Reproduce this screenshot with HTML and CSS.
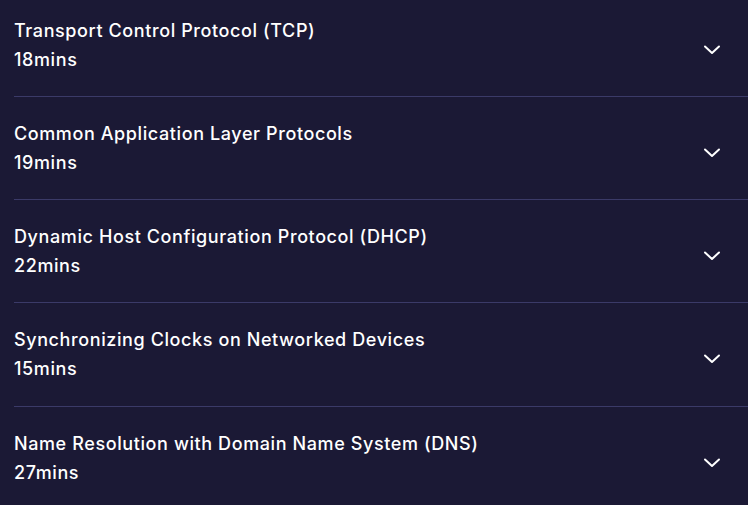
FILE: index.html
```html
<!DOCTYPE html>
<html>
<head>
<meta charset="utf-8">
<link rel="stylesheet" href="styles.css">
</head>
<body>
<ul class="list">
  <li class="row">
    <div class="text"><div class="title">Transport Control Protocol (TCP)</div><div class="dur">18mins</div></div>
    <svg class="chev" width="18" height="10" viewBox="0 0 18 10"><path d="M2 1.5 L9 8 L16 1.5" fill="none" stroke="#fff" stroke-width="2" stroke-linecap="round" stroke-linejoin="round"/></svg>
  </li>
  <li class="row">
    <div class="text"><div class="title">Common Application Layer Protocols</div><div class="dur">19mins</div></div>
    <svg class="chev" width="18" height="10" viewBox="0 0 18 10"><path d="M2 1.5 L9 8 L16 1.5" fill="none" stroke="#fff" stroke-width="2" stroke-linecap="round" stroke-linejoin="round"/></svg>
  </li>
  <li class="row">
    <div class="text"><div class="title">Dynamic Host Configuration Protocol (DHCP)</div><div class="dur">22mins</div></div>
    <svg class="chev" width="18" height="10" viewBox="0 0 18 10"><path d="M2 1.5 L9 8 L16 1.5" fill="none" stroke="#fff" stroke-width="2" stroke-linecap="round" stroke-linejoin="round"/></svg>
  </li>
  <li class="row">
    <div class="text"><div class="title">Synchronizing Clocks on Networked Devices</div><div class="dur">15mins</div></div>
    <svg class="chev" width="18" height="10" viewBox="0 0 18 10"><path d="M2 1.5 L9 8 L16 1.5" fill="none" stroke="#fff" stroke-width="2" stroke-linecap="round" stroke-linejoin="round"/></svg>
  </li>
  <li class="row">
    <div class="text"><div class="title">Name Resolution with Domain Name System (DNS)</div><div class="dur">27mins</div></div>
    <svg class="chev" width="18" height="10" viewBox="0 0 18 10"><path d="M2 1.5 L9 8 L16 1.5" fill="none" stroke="#fff" stroke-width="2" stroke-linecap="round" stroke-linejoin="round"/></svg>
  </li>
</ul>
</body>
</html>
```
FILE: styles.css
```css
html, body {
  margin: 0;
  padding: 0;
  background: #1b1935;
}
body {
  font-family: Inter, "Noto Sans", sans-serif;
  color: #fff;
}
.list {
  list-style: none;
  margin: 0 0 0 14px;
  padding: 0;
}
.row {
  display: flex;
  align-items: center;
  justify-content: space-between;
  padding: 25px 28px 24px 0;
  border-bottom: 1px solid #3b3a68;
}
.row:first-child {
  padding-top: 19px;
}
.row:nth-child(4) {
  padding-bottom: 25px;
}
.title, .dur {
  font-size: 18px;
  font-weight: 500;
  line-height: 24px;
  letter-spacing: 0.6px;
}
.title {
  margin-bottom: 5px;
}
.chev {
  display: block;
  margin-right: -1px;
  margin-top: 8px;
}
```
